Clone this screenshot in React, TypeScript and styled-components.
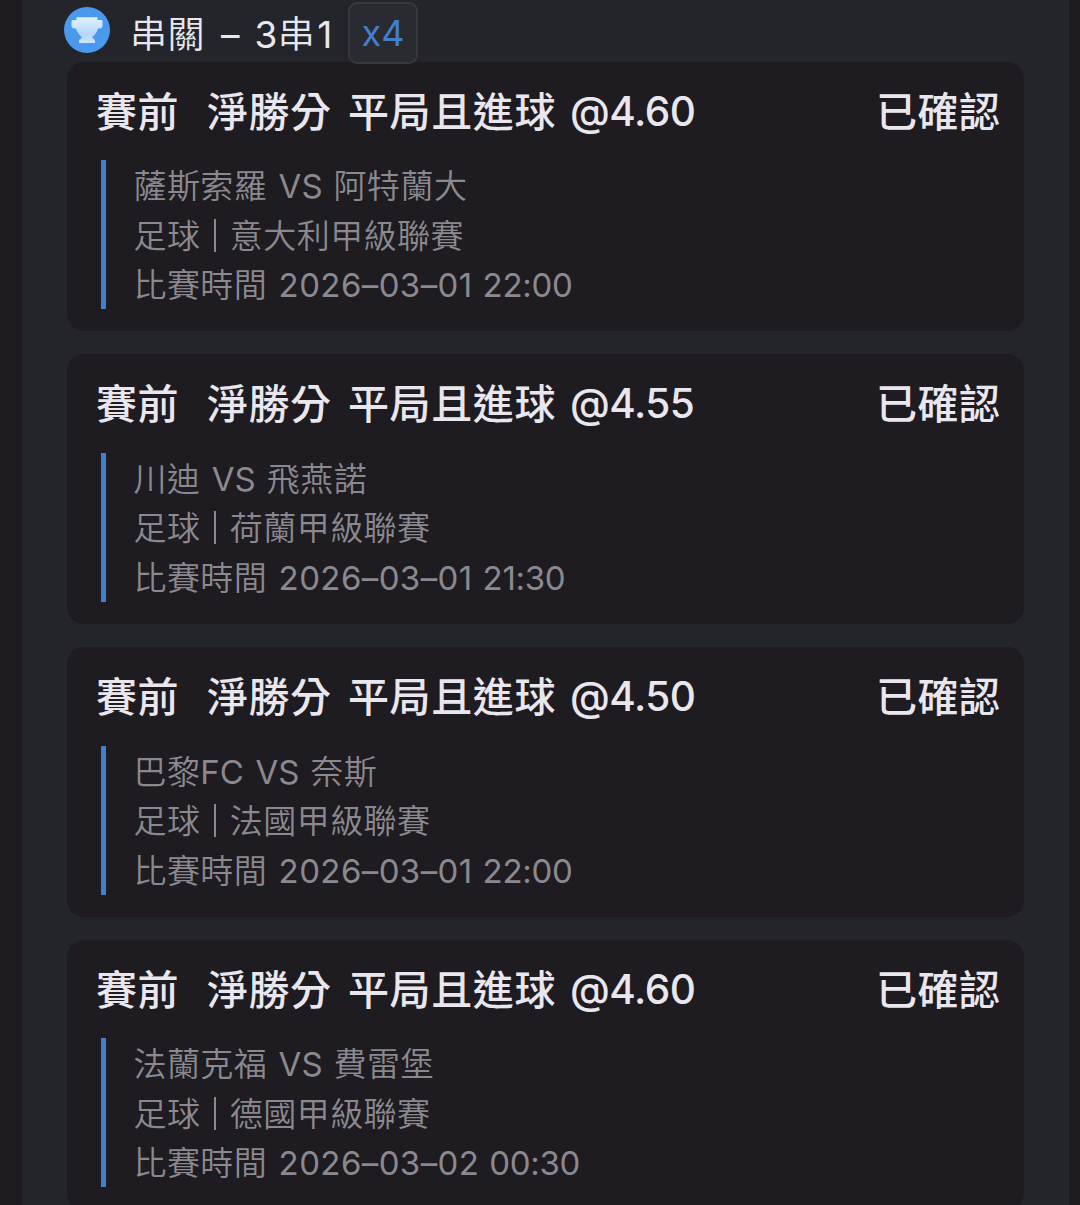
import React from "react";
import styled, { createGlobalStyle } from "styled-components";

const GlobalStyle = createGlobalStyle`
  * { box-sizing: border-box; }
  html, body { margin: 0; background: #1e1b21; }
  body { overflow: hidden; }
`;

const Page = styled.main`
  height: 1205px;
  overflow: hidden;
  padding: 0 11px 0 22px;
  background: #1e1b21;
  color: #e9e7ed;
  font-family: Inter, "Noto Sans CJK TC", sans-serif;
`;

const Panel = styled.section`
  height: 1205px;
  overflow: hidden;
  padding: 1.5px 45px 0 42px;
  background: #23252a;
`;

const Header = styled.header`
  display: flex;
  align-items: flex-start;
  height: 60.3px;
  position: relative;
  z-index: 1;
`;

const Trophy = styled.svg`
  width: 46px;
  height: 46px;
  margin: 5.5px 0 0;
  flex: none;
`;

const HeaderTitle = styled.h1`
  display: flex;
  margin: 0 0 0 20px;
  width: 218px;
  font-size: 37px;
  font-weight: 350;
  line-height: 65px;
  white-space: pre;
`;

const Multiplier = styled.span`
  display: flex;
  align-items: center;
  justify-content: center;
  flex: none;
  width: 70px;
  height: 62px;
  border: 2px solid #37373d;
  border-radius: 9px;
  background: #2a2a31;
  color: #4180cb;
  font-size: 36px;
  padding-top: 1px;
`;

const CardList = styled.div`
  display: flex;
  flex-direction: column;
  gap: 23px;
  margin-left: 3px;
`;

const Card = styled.article`
  flex: none;
  height: 269.7px;
  padding: 22px 23.5px 0 29px;
  border-radius: 17px;
  background: #1e1b21;
`;

const CardHead = styled.div`
  display: flex;
  justify-content: space-between;
  height: 76.6px;
  font-size: 41px;
  font-weight: 500;
  line-height: 56px;
`;

const Selection = styled.div`
  display: flex;
`;

const Run = styled.span<{ $before?: number; $track?: number }>`
  display: block;
  white-space: pre;
  margin-left: ${(p) => p.$before ?? 0}px;
  letter-spacing: ${(p) => p.$track ?? 0}px;
`;

const Odds = styled(Run)`
  font-size: 40.5px;
  letter-spacing: -0.5px;
`;

const Latin = styled(Run)`
  font-weight: 380;
`;

const Details = styled.div`
  margin-left: 4.5px;
  height: 149px;
  padding-left: 28px;
  border-left: 5.5px solid #4180cb;
  color: #8b898f;
  font-size: 33px;
  font-weight: 350;
`;

const DetailLine = styled.div`
  display: flex;
  height: 49.4px;
  line-height: 53px;
`;

const Divider = styled.i`
  flex: none;
  width: 2px;
  height: 33px;
  margin: 9px 14px 0 13.5px;
  background: #8b898f;
`;

type Bet = {
  odds: string;
  home: string;
  homeLatin?: string;
  away: string;
  league: string;
  date: string;
  time: string;
};

const bets: Bet[] = [
  { odds: "4.60", home: "薩斯索羅", away: "阿特蘭大", league: "意大利甲級聯賽", date: "2026–03–01", time: "22:00" },
  { odds: "4.55", home: "川迪", away: "飛燕諾", league: "荷蘭甲級聯賽", date: "2026–03–01", time: "21:30" },
  { odds: "4.50", home: "巴黎", homeLatin: "FC", away: "奈斯", league: "法國甲級聯賽", date: "2026–03–01", time: "22:00" },
  { odds: "4.60", home: "法蘭克福", away: "費雷堡", league: "德國甲級聯賽", date: "2026–03–02", time: "00:30" },
];

function TrophyIcon() {
  return (
    <Trophy viewBox="0 0 46 46" aria-hidden="true">
      <defs>
        <linearGradient id="cup" x1="0" y1="0" x2="0" y2="1">
          <stop offset="0" stopColor="#e3f1ff" />
          <stop offset="0.65" stopColor="#b4d6fc" />
          <stop offset="1" stopColor="#cde5ff" />
        </linearGradient>
      </defs>
      <circle cx="23" cy="23" r="23" fill="#4b99ef" />
      <path
        d="M12.5 10.2H33.5V13H37.3Q38.5 13 38.5 14.2V18.5Q38.5 21.5 35.5 21.5H34Q32.5 27 28.3 29.7Q28.3 31.5 30 32.3Q31 33 31 34V36H15V34Q15 33 16 32.3Q17.7 31.5 17.7 29.7Q13.5 27 12 21.5H10.5Q7.5 21.5 7.5 18.5V14.2Q7.5 13 8.7 13H12.5Z"
        fill="url(#cup)"
      />
    </Trophy>
  );
}

function BetCard({ bet }: { bet: Bet }) {
  return (
    <Card>
      <CardHead>
        <Selection>
          <Run $track={0.5}>賽前</Run>
          <Run $before={28} $track={0.5}>淨勝分</Run>
          <Run $before={16.5} $track={0.6}>平局且進球</Run>
          <Odds $before={14}>@{bet.odds}</Odds>
        </Selection>
        <Run $track={0.5}>已確認</Run>
      </CardHead>
      <Details>
        <DetailLine>
          <Run $track={0.4}>{bet.home}</Run>
          {bet.homeLatin && <Latin>{bet.homeLatin}</Latin>}
          <Latin $before={11.5}>VS</Latin>
          <Run $before={11} $track={0.45}>{bet.away}</Run>
        </DetailLine>
        <DetailLine>
          <Run $track={0.4}>足球</Run>
          <Divider />
          <Run $track={0.45}>{bet.league}</Run>
        </DetailLine>
        <DetailLine>
          <Run $track={0.4}>比賽時間</Run>
          <Latin $before={11.5} $track={0.4}>{bet.date}</Latin>
          <Latin $before={10} $track={-0.3}>{bet.time}</Latin>
        </DetailLine>
      </Details>
    </Card>
  );
}

export default function App() {
  return (
    <>
      <GlobalStyle />
      <Page>
        <Panel>
          <Header>
            <TrophyIcon />
            <HeaderTitle>
              <Run $track={0.5}>串關</Run>
              <Latin $before={16}>–</Latin>
              <Latin $before={15}>3</Latin>
              <Run $before={0.5} $track={1}>串</Run>
              <Latin $before={1.5}>1</Latin>
            </HeaderTitle>
            <Multiplier>x4</Multiplier>
          </Header>
          <CardList>
            {bets.map((bet, i) => (
              <BetCard key={i} bet={bet} />
            ))}
          </CardList>
        </Panel>
      </Page>
    </>
  );
}
